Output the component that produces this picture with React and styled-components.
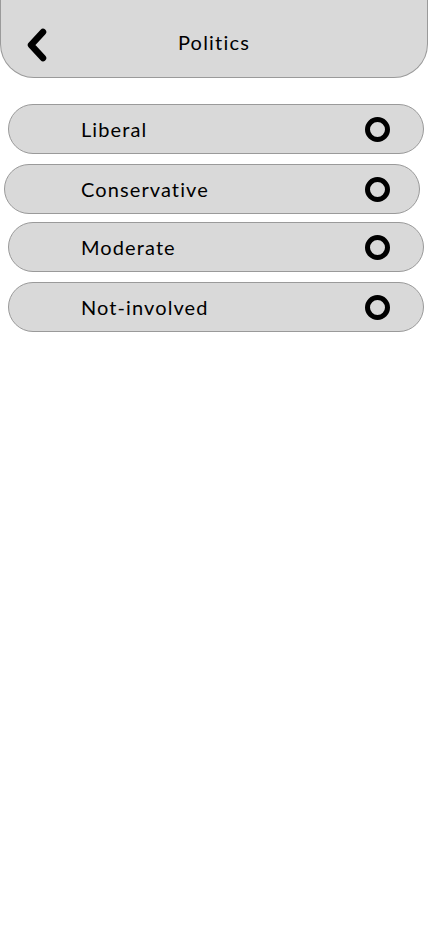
import React from 'react';
import styled, { createGlobalStyle } from 'styled-components';

const GlobalStyle = createGlobalStyle`
  body {
    margin: 0;
    background: #ffffff;
    font-family: 'Lato', 'DejaVu Sans', sans-serif;
  }
`

const options = [
  { label: 'Liberal', shift: 0, top: 26 },
  { label: 'Conservative', shift: -4, top: 10 },
  { label: 'Moderate', shift: 0, top: 8 },
  { label: 'Not-involved', shift: 0, top: 10 },
];

const App = () => {
  return (
    <Page>
      <GlobalStyle />
      <Header>
        <BackBtn aria-label="back">
          <svg width="24" height="36" viewBox="0 0 24 36">
            <path d="M18 4 L6 17 L18 30" fill="none" stroke="#000" strokeWidth="6.5" strokeLinecap="round" strokeLinejoin="round" />
          </svg>
        </BackBtn>
        <Title>Politics</Title>
      </Header>
      <List>
        {options.map(opt => (
          <Option key={opt.label} shift={opt.shift} top={opt.top}>
            <Label>{opt.label}</Label>
            <Radio />
          </Option>
        ))}
      </List>
    </Page>
  )
}

const Page = styled.div`
  width: 428px;
  min-height: 926px;
  background: #ffffff;
`

const Header = styled.header`
  position: relative;
  height: 78px;
  box-sizing: border-box;
  background-color: #d9d9d9;
  border: 1px solid #9a9a9a;
  border-top: none;
  border-radius: 0 0 34px 34px;
  display: flex;
  align-items: center;
  justify-content: center;
  padding-top: 7px;
`

const BackBtn = styled.button`
  position: absolute;
  left: 24px;
  top: 28px;
  background: none;
  border: none;
  padding: 0;
  display: flex;
  :focus {
    outline: none;
  }
`

const Title = styled.h1`
  margin: 0;
  font-size: 20px;
  font-weight: 400;
  color: #000;
  letter-spacing: 1.2px;
`

const List = styled.div`
  display: flex;
  flex-direction: column;
`

const Option = styled.div`
  display: flex;
  align-items: center;
  justify-content: space-between;
  box-sizing: border-box;
  height: 50px;
  width: 416px;
  margin-top: ${p => p.top}px;
  margin-left: ${p => 8 + p.shift}px;
  padding-left: ${p => 72 - p.shift}px;
  padding-right: ${p => 33 + p.shift}px;
  background-color: #d9d9d9;
  border: 1px solid #9a9a9a;
  border-radius: 25px;
`

const Label = styled.span`
  font-size: 20px;
  color: #000;
  letter-spacing: 1.1px;
`

const Radio = styled.span`
  width: 15px;
  height: 15px;
  border: 5px solid #000;
  border-radius: 50%;
  background: transparent;
`

export default App;
